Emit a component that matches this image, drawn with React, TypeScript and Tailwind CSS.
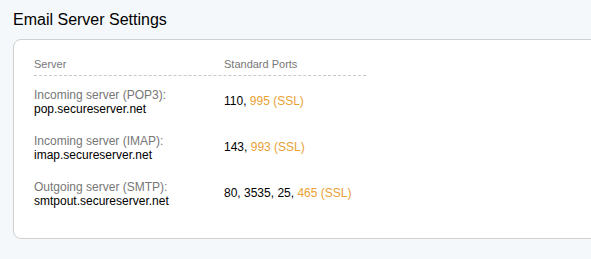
const servers = [
  { label: "Incoming server (POP3):", host: "pop.secureserver.net", ports: "110, ", ssl: "995 (SSL)" },
  { label: "Incoming server (IMAP):", host: "imap.secureserver.net", ports: "143, ", ssl: "993 (SSL)" },
  { label: "Outgoing server (SMTP):", host: "smtpout.secureserver.net", ports: "80, 3535, 25, ", ssl: "465 (SSL)" },
];

export default function App() {
  return (
    <div className="h-[259px] w-[591px] overflow-hidden bg-[#f5f8fa] pl-[13px] pt-[9px] font-['Liberation_Sans',Arial,sans-serif]">
      <h2 className="text-[16px] leading-[22px] text-black">Email Server Settings</h2>
      <div className="mt-2 h-[200px] w-[600px] rounded-lg border border-[#cfcfcf] bg-white pl-5 pt-[17px]">
        <div className="w-[332px]">
          <div className="flex border-b border-dashed border-[#c8c8c8] pb-1 text-[11px] leading-[14px] text-[#777]">
            <div className="w-[190px]">Server</div>
            <div>Standard Ports</div>
          </div>
          <div className="flex flex-col gap-[18px] pt-3">
            {servers.map((s) => (
              <div key={s.host} className="flex items-center text-[12px] leading-[14px]">
                <div className="w-[190px]">
                  <div className="text-[#777]">{s.label}</div>
                  <div className="text-black">{s.host}</div>
                </div>
                <div className="-mt-[2px] text-black">
                  {s.ports}
                  <span className="text-[#e9a134]">{s.ssl}</span>
                </div>
              </div>
            ))}
          </div>
        </div>
      </div>
    </div>
  );
}
